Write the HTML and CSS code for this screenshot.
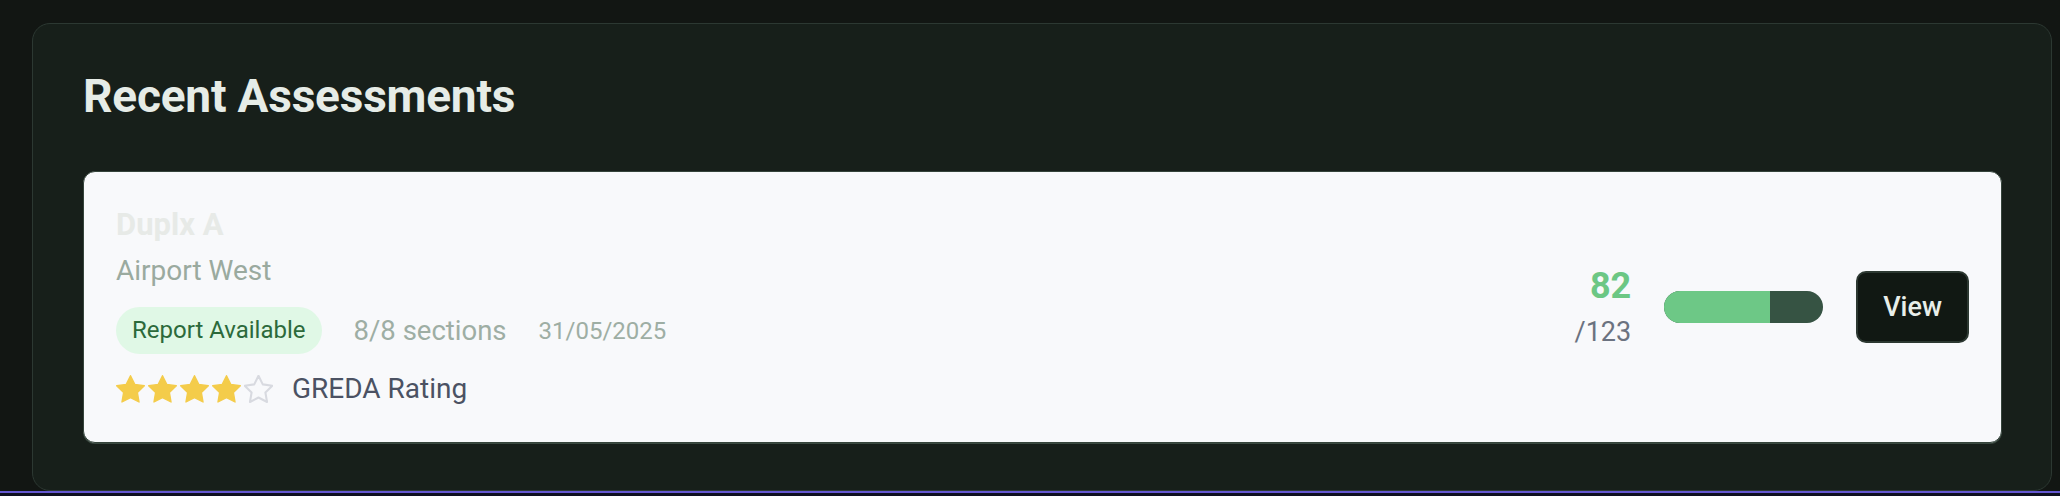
FILE: index.html
```html
<!DOCTYPE html>
<html lang="en">
<head>
<meta charset="utf-8">
<title>Recent Assessments</title>
<link rel="stylesheet" href="styles.css">
</head>
<body>
<div class="page">
  <section class="panel">
    <h2 class="panel-title">Recent Assessments</h2>
    <div class="card">
      <div class="card-info">
        <div class="card-name">Duplx A</div>
        <div class="card-location">Airport West</div>
        <div class="card-meta">
          <span class="badge">Report Available</span>
          <span class="sections">8/8 sections</span>
          <span class="date">31/05/2025</span>
        </div>
        <div class="rating">
          <div class="stars">
            <svg class="star filled" viewBox="1.5 1.5 21 20.2"><path d="M12 2l3.09 6.26L22 9.27l-5 4.87 1.18 6.88L12 17.77l-6.18 3.25L7 14.14 2 9.27l6.91-1.01L12 2z"/></svg>
            <svg class="star filled" viewBox="1.5 1.5 21 20.2"><path d="M12 2l3.09 6.26L22 9.27l-5 4.87 1.18 6.88L12 17.77l-6.18 3.25L7 14.14 2 9.27l6.91-1.01L12 2z"/></svg>
            <svg class="star filled" viewBox="1.5 1.5 21 20.2"><path d="M12 2l3.09 6.26L22 9.27l-5 4.87 1.18 6.88L12 17.77l-6.18 3.25L7 14.14 2 9.27l6.91-1.01L12 2z"/></svg>
            <svg class="star filled" viewBox="1.5 1.5 21 20.2"><path d="M12 2l3.09 6.26L22 9.27l-5 4.87 1.18 6.88L12 17.77l-6.18 3.25L7 14.14 2 9.27l6.91-1.01L12 2z"/></svg>
            <svg class="star empty" viewBox="1.5 1.5 21 20.2"><path d="M12 2l3.09 6.26L22 9.27l-5 4.87 1.18 6.88L12 17.77l-6.18 3.25L7 14.14 2 9.27l6.91-1.01L12 2z"/></svg>
          </div>
          <span class="rating-label">GREDA Rating</span>
        </div>
      </div>
      <div class="card-actions">
        <div class="score">
          <div class="score-value">82</div>
          <div class="score-total">/123</div>
        </div>
        <div class="progress"><div class="progress-fill" style="width: 66.7%"></div></div>
        <button class="view-btn">View</button>
      </div>
    </div>
  </section>
  <div class="footer-line"></div>
</div>
</body>
</html>
```

FILE: styles.css
```css
* { box-sizing: border-box; }

html, body {
  margin: 0;
  padding: 0;
  width: 2060px;
  height: 496px;
  overflow: hidden;
  background: #121613;
  font-family: Roboto, "Noto Sans", "Liberation Sans", sans-serif;
}

.page {
  padding-top: 23px;
  display: flex;
  flex-direction: column;
}

.panel {
  margin: 0 8px 0 32px;
  height: 468px;
  background: #171f1a;
  border: 1px solid #2c3832;
  border-radius: 18px;
  padding: 44px 49px 0 50px;
}

.panel-title {
  margin: 0 0 47px 0;
  font-size: 46px;
  line-height: 56px;
  font-weight: 700;
  color: #e6ece7;
  letter-spacing: -0.2px;
}

.card {
  height: 272px;
  background: #f8f9fb;
  border: 1px solid #35443b;
  border-radius: 12px;
  box-shadow: 0 1px 0 #3a4940;
  padding: 32px;
  display: flex;
  justify-content: space-between;
  align-items: center;
}

.card-info {
  display: flex;
  flex-direction: column;
  align-self: stretch;
}

.card-name {
  font-size: 31px;
  line-height: 42px;
  font-weight: 700;
  color: #e7eae7;
}

.card-location {
  margin-top: 5px;
  font-size: 28px;
  line-height: 40px;
  color: #9aaa9f;
}

.card-meta {
  margin-top: 16px;
  display: flex;
  align-items: center;
  gap: 32px;
}

.badge {
  background: #e0f8e6;
  color: #2c6a3b;
  font-size: 24px;
  line-height: 35px;
  font-weight: 400;
  padding: 6px 16px;
  border-radius: 24px;
}

.sections {
  font-size: 27.5px;
  line-height: 40px;
  color: #9eaea4;
}

.date {
  font-size: 24px;
  line-height: 36px;
  color: #9eaea4;
}

.rating {
  margin-top: 15px;
  display: flex;
  align-items: center;
  gap: 19px;
  height: 40px;
}

.stars {
  display: flex;
  gap: 3px;
}

.star {
  width: 29px;
  height: 28px;
  display: block;
}

.star.filled path {
  fill: #f4cc4a;
  stroke: #f4cc4a;
  stroke-width: 1;
  stroke-linejoin: round;
}

.star.empty path {
  fill: none;
  stroke: #d8dae0;
  stroke-width: 1.5;
  stroke-linejoin: round;
}

.rating-label {
  font-size: 28px;
  line-height: 40px;
  color: #4b5263;
}

.card-actions {
  display: flex;
  align-items: center;
  gap: 33px;
}

.score {
  display: flex;
  flex-direction: column;
  align-items: flex-end;
}

.score-value {
  font-size: 36px;
  line-height: 46px;
  font-weight: 700;
  color: #6cc784;
}

.score-total {
  margin-top: 4px;
  font-size: 27px;
  line-height: 38px;
  color: #6b7280;
}

.progress {
  width: 159px;
  height: 32px;
  border-radius: 16px;
  background: #365343;
  overflow: hidden;
}

.progress-fill {
  height: 100%;
  background: #6dc886;
}

.view-btn {
  font-family: Roboto, "Noto Sans", "Liberation Sans", sans-serif;
  height: 72px;
  padding: 0 25px;
  background: #111813;
  border: 2px solid #2c3831;
  border-radius: 10px;
  color: #e8eee9;
  font-size: 27px;
  line-height: 36px;
  font-weight: 500;
}

.footer-line {
  height: 5px;
  border-top: 2px solid #6457d0;
  background: #0e0f20;
}
```
